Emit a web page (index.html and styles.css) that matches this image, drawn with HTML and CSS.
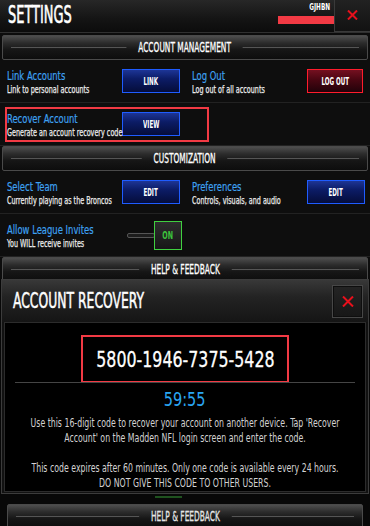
FILE: index.html
```html
<!DOCTYPE html>
<html lang="en">
<head>
<meta charset="utf-8">
<title>Settings</title>
<link rel="stylesheet" href="styles.css">
</head>
<body>
<div class="settings">
  <header class="topbar">
    <h1 class="page-title"><span class="sq">SETTINGS</span></h1>
    <div class="user">
      <span class="user-name"><span class="sq">GJHBN</span></span>
      <span class="user-bar"></span>
    </div>
    <button class="top-close" aria-label="Close">
      <svg width="11" height="10" viewBox="0 0 11 10"><path d="M1 0.5L10 9.5M10 0.5L1 9.5" stroke="#e8101c" stroke-width="2"/></svg>
    </button>
  </header>

  <div class="bar bar-first"><span class="bar-title">ACCOUNT MANAGEMENT</span></div>
  <div class="row">
    <div class="cell">
      <div class="text"><div class="label"><span class="sq">Link Accounts</span></div><div class="desc"><span class="sq">Link to personal accounts</span></div></div>
      <button class="btn blue"><span>LINK</span></button>
    </div>
    <div class="cell">
      <div class="text"><div class="label"><span class="sq">Log Out</span></div><div class="desc"><span class="sq">Log out of all accounts</span></div></div>
      <button class="btn red"><span>LOG OUT</span></button>
    </div>
  </div>
  <div class="row">
    <div class="cell hl">
      <div class="text"><div class="label"><span class="sq">Recover Account</span></div><div class="desc"><span class="sq">Generate an account recovery code</span></div></div>
      <button class="btn blue"><span>VIEW</span></button>
    </div>
  </div>

  <div class="bar"><span class="bar-title">CUSTOMIZATION</span></div>
  <div class="row">
    <div class="cell">
      <div class="text"><div class="label"><span class="sq">Select Team</span></div><div class="desc"><span class="sq">Currently playing as the Broncos</span></div></div>
      <button class="btn blue"><span>EDIT</span></button>
    </div>
    <div class="cell">
      <div class="text"><div class="label"><span class="sq">Preferences</span></div><div class="desc"><span class="sq">Controls, visuals, and audio</span></div></div>
      <button class="btn blue"><span>EDIT</span></button>
    </div>
  </div>
  <div class="row">
    <div class="cell">
      <div class="text"><div class="label"><span class="sq">Allow League Invites</span></div><div class="desc"><span class="sq">You WILL receive invites</span></div></div>
      <div class="toggle"><span class="track"></span><span class="knob"><span>ON</span></span></div>
    </div>
  </div>
  <div class="bar"><span class="bar-title">HELP &amp; FEEDBACK</span></div>
</div>

<div class="recovery">
  <section class="modal">
    <div class="modal-head">
      <h2 class="modal-title"><span class="sq">ACCOUNT RECOVERY</span></h2>
      <button class="modal-close" aria-label="Close">
        <svg width="12" height="11" viewBox="0 0 12 11"><path d="M1 0.5L11 10.5M11 0.5L1 10.5" stroke="#e8101c" stroke-width="2"/></svg>
      </button>
    </div>
    <div class="modal-body">
      <div class="code-box"><span>5800-1946-7375-5428</span></div>
      <div class="sep"></div>
      <div class="timer"><span>59:55</span></div>
      <div class="note">
        <span>Use this 16-digit code to recover your account on another device. Tap 'Recover</span>
        <span>Account' on the Madden NFL login screen and enter the code.</span>
        <span class="blank">&nbsp;</span>
        <span>This code expires after 60 minutes. Only one code is available every 24 hours.</span>
        <span>DO NOT GIVE THIS CODE TO OTHER USERS.</span>
      </div>
    </div>
  </section>
  <div class="below">
    <span class="green-mark"></span>
    <div class="bar bar-dim"><span class="bar-title">HELP &amp; FEEDBACK</span></div>
  </div>
</div>
</body>
</html>
```

FILE: styles.css
```css
* { box-sizing: border-box; margin: 0; padding: 0; }
html, body { width: 370px; height: 526px; overflow: hidden; }
body {
  background: #080808;
  font-family: "Liberation Sans Narrow", "DejaVu Sans Condensed", "Liberation Sans", sans-serif;
  font-stretch: condensed;
  color: #fff;
}
button { font-family: inherit; color: inherit; cursor: pointer; }
.sq { display: inline-block; white-space: nowrap; transform-origin: left center; }

/* ---------- settings page ---------- */
.settings { height: 279px; overflow: hidden; background: #0c0c0c; }

.topbar {
  height: 33px;
  display: flex;
  background: linear-gradient(#272727, #141414 60%, #0c0c0c);
  border-bottom: 1px solid #303030;
}
.page-title {
  flex: 1;
  font-size: 24px;
  font-weight: normal;
  line-height: 31px;
  padding-left: 8px;
}
.page-title .sq { transform: scaleX(0.6); -webkit-text-stroke: 0.6px #fff; }
.user {
  width: 56px;
  display: flex;
  flex-direction: column;
  align-items: flex-end;
  padding-top: 3px;
}
.user-name { font-size: 8px; font-weight: bold; line-height: 10px; padding-right: 4px; }
.user-name .sq { transform: scaleX(0.8); transform-origin: right center; }
.user-bar { margin-top: 3px; width: 56px; height: 8px; background: #f23a44; }
.top-close {
  width: 36px;
  border: none;
  border-left: 1px solid #3a3a3a;
  border-bottom: 1px solid #3a3a3a;
  background: linear-gradient(#222, #121212);
  display: flex;
  justify-content: center;
  padding-top: 10px;
}

.bar {
  margin: 0 2px;
  height: 25px;
  border: 1px solid #4a4a4a;
  border-radius: 2px;
  display: flex;
  justify-content: center;
  overflow: hidden;
  background:
    linear-gradient(#555, #555) center / calc(100% - 16px) 1px no-repeat,
    linear-gradient(#4e4e4e 0%, #2c2c2c 30%, #161616 60%, #0d0d0d 100%);
}
.bar-first { margin-top: 2px; }
.bar-title {
  height: 100%;
  padding: 0 20px;
  font-size: 14px;
  line-height: 23px;
  white-space: nowrap;
  background: linear-gradient(#4e4e4e 0%, #2c2c2c 30%, #161616 60%, #0d0d0d 100%);
  transform: scaleX(0.59);
  -webkit-text-stroke: 0.3px #fff;
}

.row {
  height: 43px;
  border-bottom: 1px solid #222;
  display: grid;
  grid-template-columns: 185px 185px;
  align-items: center;
  background: #0e0e0e;
}
.cell { display: flex; align-items: center; padding-left: 7px; }
.cell.hl {
  margin-left: 5px;
  width: 204px;
  height: 35px;
  padding-left: 0;
  border: 2px solid #f23a44;
}
.text { width: 115px; padding-top: 1px; }
.label { font-size: 13px; line-height: 14px; color: #3ea2f2; }
.label .sq { transform: scaleX(0.72); -webkit-text-stroke: 0.2px #3ea2f2; }
.desc { font-size: 10.5px; line-height: 12px; color: #ececec; }
.desc .sq { transform: scaleX(0.68); -webkit-text-stroke: 0.25px #ececec; }

.btn {
  width: 58px;
  height: 24px;
  display: flex;
  align-items: center;
  justify-content: center;
  font-size: 10px;
  font-weight: bold;
}
.btn span { display: inline-block; transform: scaleX(0.62); white-space: nowrap; }
.btn.blue {
  border: 1.5px solid #1f5cff;
  background: linear-gradient(#1d3596 0%, #0c1c66 40%, #050d3a 100%);
}
.btn.red {
  width: 56px;
  border: 1.5px solid #ff1c2c;
  background: linear-gradient(#741020 0%, #4a0612 45%, #22020a 100%);
}

.toggle { display: flex; align-items: center; margin-left: 5px; }
.track {
  width: 28px;
  height: 5px;
  border: 1px solid #555;
  border-radius: 2px;
  background: #1c1c1c;
}
.knob {
  width: 28px;
  height: 29px;
  margin-left: -1px;
  border: 1.5px solid #40d040;
  background: linear-gradient(#2e2e2e, #171717);
  display: flex;
  align-items: center;
  justify-content: center;
  color: #3cc43c;
  font-size: 10px;
  font-weight: bold;
}
.knob span { display: inline-block; transform: scaleX(0.7); }

/* ---------- recovery modal ---------- */
.recovery { height: 247px; background: #080808; display: flex; flex-direction: column; }
.modal {
  height: 215px;
  margin: 0 1px;
  border: 1px solid #3c3c3c;
  background: #121212;
  display: flex;
  flex-direction: column;
}
.modal-head {
  height: 42px;
  flex: none;
  display: flex;
  align-items: center;
  padding: 0 5px 0 11px;
  background: linear-gradient(#383838, #232323 40%, #151515);
}
.modal-title { flex: 1; font-size: 22px; font-weight: normal; line-height: 26px; }
.modal-title .sq { transform: scaleX(0.625); -webkit-text-stroke: 0.5px #fff; }
.modal-close {
  width: 31px;
  height: 33px;
  border: 1px solid #474747;
  background: linear-gradient(#242424, #171717);
  box-shadow: inset 0 0 0 1px #0e0e0e;
  display: flex;
  align-items: center;
  justify-content: center;
}
.modal-body {
  flex: 1;
  margin: 0 2px 2px;
  background: #000;
  border: 1px solid #2c2c2c;
  display: flex;
  flex-direction: column;
  align-items: center;
  padding-top: 12px;
}
.code-box {
  width: 208px;
  height: 48px;
  border: 2.5px solid #f23a44;
  display: flex;
  align-items: center;
  justify-content: center;
  font-size: 22px;
  padding-top: 1px;
  white-space: nowrap;
}
.code-box span { display: inline-block; transform: scaleX(0.8); -webkit-text-stroke: 0.3px #fff; }
.sep { align-self: stretch; height: 1px; margin: -1px 10px 0; background: #454545; }
.timer { margin-top: 5px; font-size: 19px; line-height: 22px; color: #2aa6f2; }
.timer span { display: inline-block; transform: scaleX(0.85); }
.note {
  align-self: stretch;
  margin-top: 6px;
  display: flex;
  flex-direction: column;
  align-items: center;
  font-size: 11.5px;
  line-height: 15px;
  color: #d2d2d2;
  transform: scaleX(0.755);
}
.note span { white-space: nowrap; }

.below { flex: 1; display: flex; flex-direction: column; align-items: center; }
.green-mark { width: 27px; height: 2px; margin-top: 2px; margin-right: 33px; background: #1f521f; }
.bar-dim {
  align-self: stretch;
  margin: 6px 7px 0;
  height: 25px;
  color: #d8d8d8;
}
```
